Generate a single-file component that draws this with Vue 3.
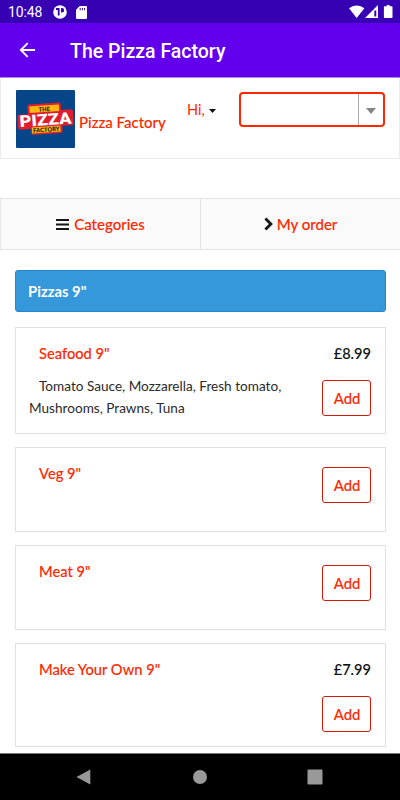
<script setup>
const items = [
  { name: 'Seafood 9"', price: '£8.99', note: 'Tomato Sauce, Mozzarella, Fresh tomato, Mushrooms, Prawns, Tuna', size: 'tall' },
  { name: 'Veg 9"', size: 'short' },
  { name: 'Meat 9"', size: 'short' },
  { name: 'Make Your Own 9"', price: '£7.99', size: 'last' },
]
</script>

<template>
  <div class="screen">
    <div class="status">
      <span class="time">10:48</span>
      <svg class="app-icon" width="14" height="14" viewBox="0 0 14 14">
        <circle cx="7" cy="7" r="6.800" fill="#fff" />
        <path d="M3 3h3.600v7.500H4.800V5H3zM8 3h1a2.200 2.200 0 0 1 0 4.400H8z" fill="#3700b3" />
      </svg>
      <svg class="sd-icon" width="11" height="13" viewBox="0 0 11 13">
        <path d="M3.700 0H10a1 1 0 0 1 1 1v11a1 1 0 0 1-1 1H1a1 1 0 0 1-1-1V3.700z" fill="#fff" />
        <path d="M3.700 2h1v2.200h-1zM5.900 2h1v2.200h-1zM8.100 2h1v2.200h-1z" fill="#3700b3" />
      </svg>
      <svg class="signals" width="45" height="14" viewBox="0 0 45 14">
        <path d="M0 3.300C4.500-.6 11-.6 15.400 3.300L7.700 13z" fill="#fff" />
        <path d="M16 13L29 0V13z" fill="#fff" />
        <path d="M25.300 5.500h2v6h-2z" fill="#3700b3" />
        <path d="M35.700 1.300h2V0h3v1.300h2q.8 0 .8.800v10.100q0 .8-.8.800h-7q-.8 0-.8-.8V2.100q0-.8.800-.8z" fill="#fff" />
      </svg>
    </div>
    <header class="appbar">
      <svg class="back" width="16" height="16" viewBox="0 0 16 16" fill="none" stroke="#fff" stroke-width="1.800">
        <path d="M16 8H2M8.700 1.100L1.800 8l6.900 6.900" />
      </svg>
      <h1>The Pizza Factory</h1>
    </header>

    <section class="brandbar">
      <svg class="logo" width="59" height="58" viewBox="0 0 58 58" preserveAspectRatio="none">
        <rect width="58" height="58" rx="1" fill="#064587" />
        <g transform="rotate(-4 29 29)">
          <path d="M14 13.500H43Q45 13.500 45 15.500V21H54Q56.500 21 56.500 23.500V34.500Q56.500 37 54 37H45V42Q45 44 43 44H16Q14 44 14 42V38H4Q1.500 38 1.500 35.500V25.500Q1.500 23 4 23H12V15.500Q12 13.500 14 13.500z" fill="#df1d2d" />
          <rect x="14" y="15.500" width="29" height="6.500" fill="#fdb913" />
          <rect x="15" y="36.500" width="28" height="6" fill="#fdb913" />
          <text x="28.500" y="21.300" class="logo-small" textLength="11" lengthAdjust="spacingAndGlyphs">THE</text>
          <text x="29" y="35.300" class="logo-big" textLength="51" lengthAdjust="spacingAndGlyphs">PIZZA</text>
          <text x="29" y="41.800" class="logo-small" textLength="26" lengthAdjust="spacingAndGlyphs">FACTORY</text>
        </g>
      </svg>
      <a class="brand">Pizza Factory</a>
      <a class="hi">Hi,</a>
      <svg class="caret" width="7" height="4" viewBox="0 0 7 4"><path d="M0 0h7L3.500 4z" fill="#111" /></svg>
      <div class="select">
        <span class="select-arrow"><svg width="10" height="6" viewBox="0 0 10 6"><path d="M0 0h10L5 6z" fill="#858585" /></svg></span>
      </div>
    </section>

    <nav class="tabs">
      <a class="tab">
        <svg width="13" height="11" viewBox="0 0 13 11"><path d="M0 1h13M0 5.500h13M0 10h13" stroke="#151515" stroke-width="1.800" /></svg>
        <span class="tab-cat">Categories</span>
      </a>
      <a class="tab">
        <svg width="9" height="14" viewBox="0 0 9 14"><path d="M1.400 1.500L6.900 7l-5.500 5.500" fill="none" stroke="#151515" stroke-width="2.800" /></svg>
        <span class="tab-order">My order</span>
      </a>
    </nav>

    <main class="menu">
      <h2 class="group">Pizzas 9"</h2>
      <article v-for="item in items" :key="item.name" class="card" :class="item.size">
        <div class="info">
          <h3>{{ item.name }}</h3>
          <p v-if="item.note">{{ item.note }}</p>
        </div>
        <div class="side">
          <span v-if="item.price" class="price">{{ item.price }}</span>
          <button>Add</button>
        </div>
      </article>
    </main>

    <footer class="navbar">
      <svg width="16" height="16" viewBox="0 0 16 16"><path d="M.5 8L14.300.4V15.600z" fill="#999" /></svg>
      <svg width="16" height="16" viewBox="0 0 16 16"><circle cx="8" cy="8" r="7" fill="#999" /></svg>
      <svg width="16" height="16" viewBox="0 0 16 16"><rect x=".5" y=".5" width="15" height="15" rx="1" fill="#999" /></svg>
    </footer>
  </div>
</template>

<style>
body { background: #fff; }
</style>

<style scoped>
* { box-sizing: border-box; }
.screen { width: 400px; height: 800px; overflow: hidden; display: flex; flex-direction: column; background: #fff; font-family: Lato, sans-serif; font-size: 15px; color: #111; }
.screen > * { flex-shrink: 0; }
h1, h2, h3, p { margin: 0; }
svg { display: block; flex-shrink: 0; }
.status { height: 23px; background: #3700b3; display: flex; align-items: center; padding: 1px 6px 0 8px; font-family: Roboto, sans-serif; font-size: 14px; color: #fff; }
.time { width: 45px; letter-spacing: -.1px; }
.sd-icon { margin-left: 9px; }
.signals { margin-left: auto; }
.appbar { height: 55px; background: #6200ee; border-bottom: 1px solid #a58bdd; display: flex; align-items: center; padding: 0 0 0 19px; }
h1 { margin-left: 35px; padding-top: 2px; font: 500 19.500px Roboto, sans-serif; color: #fff; }
.brandbar { height: 81px; border: 1px solid #ececec; border-top: 0; display: flex; align-items: flex-start; padding: 12px 14px 0 15px; }
.brand { margin: 23px 0 0 4px; width: 108px; line-height: 18px; font-weight: 500; -webkit-text-stroke: .1px; color: #ff2800; white-space: nowrap; }
.hi { margin-top: 11px; width: 22px; line-height: 18px; font-size: 14.500px; color: #ff2800; }
.caret { margin-top: 19px; }
.select { margin: 2px 0 0 auto; width: 146px; height: 35px; border: 2px solid #ff2800; border-radius: 4px; display: flex; justify-content: flex-end; }
.select-arrow { width: 25px; border-left: 1px solid #aaa; display: flex; align-items: center; justify-content: center; padding-top: 2px; }
.logo-small { font: 900 6px Lato, sans-serif; text-anchor: middle; fill: #17140c; }
.logo-big { font: 900 16px Roboto, sans-serif; text-anchor: middle; fill: #fff; }
.tabs { height: 52px; margin-top: 39px; display: flex; border: 1px solid #e7e7e7; border-right: 0; background: #fafafa; }
.tab { flex: 1; display: flex; align-items: center; justify-content: center; color: #ff2800; font-weight: 500; -webkit-text-stroke: .1px; }
.tab + .tab { border-left: 1px solid #e3e3e3; }
.tab-cat { margin-left: 5px; }
.tab-order { margin-left: 4px; }
.menu { padding: 20px 14px 0 15px; display: flex; flex-direction: column; }
.group { height: 42px; background: #3498db; border: 1px solid #2188ce; border-radius: 3px; padding-left: 12px; font-size: 14.800px; line-height: 41px; font-weight: 700; color: #fff; margin-bottom: 15px; }
.card { border: 1px solid #e1e1e1; margin-bottom: 13px; display: flex; justify-content: space-between; padding: 0 14px 0 13px; }
.tall { height: 107px; }
.short { height: 85px; }
.last { height: 104px; margin-bottom: 6px; }
.info { padding-top: 15px; }
h3 { padding-left: 10px; font-size: 14.700px; line-height: 21px; font-weight: 500; -webkit-text-stroke: .1px; color: #ff2800; }
p { width: 270px; text-indent: 10px; margin-top: 11px; font-size: 13.600px; line-height: 22px; color: #2a2a2a; }
.side { display: flex; flex-direction: column; align-items: flex-end; padding-top: 15px; }
.price { line-height: 21px; font-size: 14.600px; font-weight: 500; -webkit-text-stroke: .1px; margin-bottom: 16px; }
.short .side { padding-top: 19px; }
button { width: 49px; height: 36px; background: #fff; border: 1px solid #d01a0c; border-radius: 3px; padding: 0 0 1px 1px; font: 500 14.800px Lato, sans-serif; -webkit-text-stroke: .1px; color: #ff2800; }
.navbar { height: 47px; margin-top: auto; background: #000; border-top: 1px solid #777; display: flex; align-items: center; justify-content: space-between; padding: 0 77px 0 76px; }
</style>
